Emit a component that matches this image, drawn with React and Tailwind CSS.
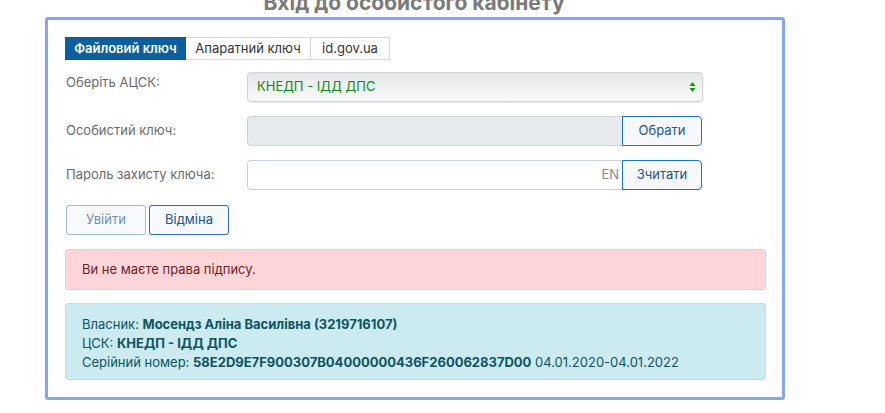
import { useState } from 'react'

const tabs = ['Файловий ключ', 'Апаратний ключ', 'id.gov.ua']

export default function App() {
  const [tab, setTab] = useState(0)

  return (
    <div className="w-[885px] h-[413px] overflow-hidden bg-white font-['Inter','Liberation_Sans',sans-serif] text-[13px]">
      {/* title, cut by the top edge */}
      <h1 className="-mt-[8px] h-[19px] text-center text-[21px] leading-[22px] font-bold text-[#7a7a7a] pr-[57px]">
        Вхід до особистого кабінету
      </h1>

      <div className="ml-[45px] mt-[6px] w-[740px] h-[383px] border-[3px] border-[#87a5f8] rounded-[3px] pt-[17px] pl-[17px] pr-[16px]">
        {/* tabs */}
        <div className="flex h-[23px]">
          {tabs.map((t, i) => (
            <button
              key={t}
              onClick={() => setTab(i)}
              className={`h-full border text-[13px] ${i === 0 ? 'w-[121px]' : i === 1 ? 'w-[125px] border-l-0' : 'w-[79px] border-l-0'} ${tab === i ? 'bg-[#0b5f9f] border-[#0b5f9f] text-white font-semibold' : 'bg-white border-[#d6d6d6] text-[#333]'}`}
            >
              {t}
            </button>
          ))}
        </div>

        {/* form */}
        <div className="mt-[12px] flex flex-col gap-[14px]">
          <div className="flex items-start h-[30px]">
            <label className="w-[182px] pl-[1px] pt-[1px] text-[#6b6b6b]">Оберіть АЦСК:</label>
            <div className="w-[456px] h-[30px] rounded-[4px] border border-[#cdd3da] bg-gradient-to-b from-[#e6e7e9] to-[#fafafa] shadow-[0_1px_1px_rgba(0,0,0,0.08)] flex items-center justify-between pl-[9px] pr-[6px]">
              <span className="text-[#0f8a0f]">КНЕДП - ІДД ДПС</span>
              <svg width="7" height="12" viewBox="0 0 7 12">
                <path d="M3.5 1 L6.5 5 L0.5 5 Z" fill="#159015" />
                <path d="M3.5 11 L6.5 7 L0.5 7 Z" fill="#159015" />
              </svg>
            </div>
          </div>

          <div className="flex items-center h-[30px]">
            <label className="w-[182px] pl-[1px] text-[#6b6b6b]">Особистий ключ:</label>
            <div className="w-[375px] h-[30px] rounded-l-[4px] border border-r-0 border-[#ccd3da] bg-[#e8ebee]" />
            <button className="w-[80px] h-[30px] rounded-r-[4px] border border-[#1b74c9] bg-[#f7f8fb] text-[#22538f]">Обрати</button>
          </div>

          <div className="flex items-center h-[30px]">
            <label className="w-[182px] pl-[1px] text-[#6b6b6b]">Пароль захисту ключа:</label>
            <div className="w-[375px] h-[30px] rounded-l-[4px] border border-r-0 border-[#ccd3da] bg-white flex items-center justify-end pr-[3px] text-[#8a8a8a]">
              EN
            </div>
            <button className="w-[80px] h-[30px] rounded-r-[4px] border border-[#1b74c9] bg-[#f7f8fb] text-[#22538f]">Зчитати</button>
          </div>
        </div>

        <div className="mt-[15px] flex gap-[3px] pl-[1px]">
          <button className="w-[80px] h-[30px] rounded-[3px] border border-[#9fbbd9] bg-[#f7f9fc] text-[#6f8db0]">Увійти</button>
          <button className="w-[80px] h-[30px] rounded-[3px] border border-[#2a6fb8] bg-[#f7f9fc] text-[#22538f]">Відміна</button>
        </div>

        <div className="mt-[14px] h-[41px] rounded-[3px] border border-[#f6c4ca] bg-[#fed6da] flex items-center pl-[16px] text-[#721c24]">
          Ви не маєте права підпису.
        </div>

        <div className="mt-[13px] h-[77px] rounded-[3px] border border-[#b5e3ec] bg-[#cbebf0] pl-[16px] pt-[11px] text-[#0c5460] leading-[19px]">
          <div>Власник: <b>Мосендз Аліна Василівна (3219716107)</b></div>
          <div>ЦСК: <b>КНЕДП - ІДД ДПС</b></div>
          <div>Серійний номер: <b>58E2D9E7F900307B04000000436F260062837D00</b> 04.01.2020-04.01.2022</div>
        </div>
      </div>
    </div>
  )
}
